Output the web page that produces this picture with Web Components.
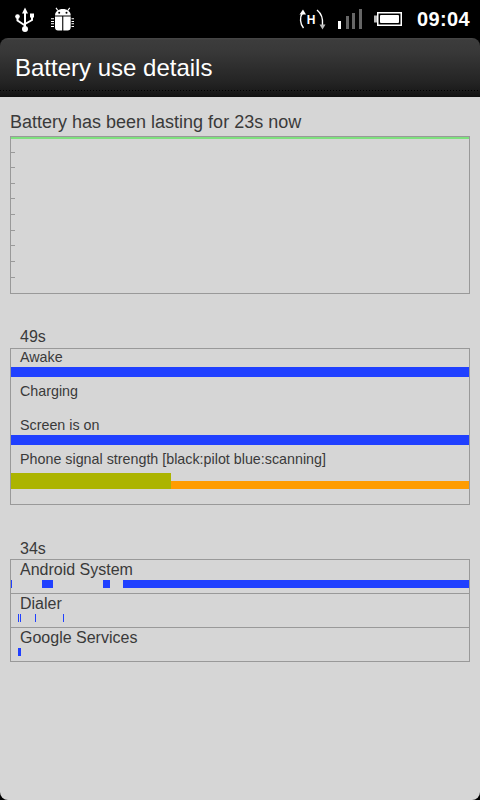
<!DOCTYPE html>
<html>
<head>
<meta charset="utf-8">
<title>Battery use details</title>
<style>
  html, body { margin: 0; padding: 0; background: #000; }
  body { width: 480px; height: 800px; overflow: hidden; font-family: "Liberation Sans", Arial, sans-serif; }
</style>
</head>
<body>
<phone-screen>
  <status-bar slot="status" time="09:04"></status-bar>
  <title-bar slot="title">Battery use details</title-bar>
  <battery-graph label="Battery has been lasting for 23s now"></battery-graph>
  <history-panel heading="49s" size="14" style="--panel-height:157px; --heading-height:21px; margin-top:33px">
    <history-row label="Awake" segments="0:458"></history-row>
    <history-row label="Charging"></history-row>
    <history-row label="Screen is on" segments="0:458"></history-row>
    <signal-row label="Phone signal strength [black:pilot blue:scanning]"></signal-row>
  </history-panel>
  <history-panel heading="34s" size="16" style="--panel-height:103px; --heading-height:20px; margin-top:34px">
    <history-row divided label="Android System" segments="0:1,31:11,92:7,112:346"></history-row>
    <history-row divided label="Dialer" segments="7:1,9:1,24:1,52:1"></history-row>
    <history-row label="Google Services" segments="7:3"></history-row>
  </history-panel>
</phone-screen>

<script>
const screenTemplate = document.createElement('template');
screenTemplate.innerHTML = `
  <style>
    :host {
      display: flex;
      flex-direction: column;
      width: 480px;
      height: 800px;
      background: #000;
    }
    .content {
      flex: 1;
      display: flex;
      flex-direction: column;
      padding: 14px 10px 0;
      background: #d6d6d6;
      border-radius: 0 0 8px 8px;
    }
  </style>
  <slot name="status"></slot>
  <slot name="title"></slot>
  <div class="content"><slot></slot></div>
`;

class PhoneScreen extends HTMLElement {
  constructor() {
    super();
    this.attachShadow({ mode: 'open' }).appendChild(screenTemplate.content.cloneNode(true));
  }
}

const statusTemplate = document.createElement('template');
statusTemplate.innerHTML = `
  <style>
    :host {
      display: flex;
      align-items: center;
      height: 38px;
      background: #000;
      color: #fff;
    }
    svg { display: block; flex: none; }
    .left { display: flex; gap: 14px; margin-left: 14px; margin-top: -1px; }
    .right { display: flex; align-items: center; margin-left: auto; margin-right: 10px; }
    .hspa { margin-right: 12px; }
    .signal { margin-right: 12px; }
    .battery { margin-right: 15px; }
    .time { font: bold 20px/24px "Liberation Sans", Arial, sans-serif; letter-spacing: 0.35px; }
  </style>
  <div class="left">
    <svg width="22" height="26" viewBox="0 0 22 26" fill="none" stroke="#fff" stroke-width="2">
      <path d="M11 5V22"/>
      <path d="M3.500 11V14.500L11 19.500"/>
      <path d="M18 10V14L11 18"/>
      <path d="M11 1.500L14 7.500H8Z" fill="#fff" stroke="none"/>
      <circle cx="3.500" cy="10.500" r="2.300" fill="#fff" stroke="none"/>
      <rect x="16" y="7.500" width="4" height="4" fill="#fff" stroke="none"/>
      <circle cx="11" cy="23" r="3" fill="#fff" stroke="none"/>
    </svg>
    <svg width="24" height="26" viewBox="0 0 24 26" fill="#fff">
      <path d="M5 9.500C5 5.500 8.500 3 12.850 3S20.700 5.500 20.700 9.500Z"/>
      <path d="M7.800 4.500L6 1.800M17.900 4.500L19.700 1.800" stroke="#fff" stroke-width="1.200"/>
      <circle cx="9.200" cy="6.800" r="1" fill="#000"/>
      <circle cx="16.500" cy="6.800" r="1" fill="#000"/>
      <path d="M5 10.500H12.200V24.500H8C6.300 24.500 5 23.200 5 21.500ZM13.300 10.500H20.700V21.500C20.700 23.200 19.400 24.500 17.700 24.500H13.300Z"/>
      <path d="M1 12.800H4M1 15.500H4M1 17.800H4M1 20.500H4M21.500 12.800H24M21.500 15.500H24M21.500 17.800H24M21.500 20.500H24" stroke="#fff" stroke-width="1.100"/>
    </svg>
  </div>
  <div class="right">
    <svg class="hspa" width="28" height="24" viewBox="0 0 28 24" fill="none" stroke="#fff" stroke-width="1.400">
      <path d="M4.500 6C1.500 10 2 17 5.500 21"/>
      <path d="M5 2.500L8 7.500H1.500Z" fill="#fff" stroke="none"/>
      <path d="M19 3C24 7 25 13 24.500 18"/>
      <path d="M24.500 22.500L21.500 17.500H27.500Z" fill="#bbb" stroke="none"/>
      <text x="13" y="16.500" text-anchor="middle" fill="#fff" stroke="none" font-family="Liberation Sans" font-weight="bold" font-size="12">H</text>
    </svg>
    <svg class="signal" width="24" height="20" viewBox="0 0 24 20">
      <rect x="0" y="12" width="3" height="8" fill="#fff"/>
      <rect x="8" y="7" width="3" height="13" fill="#666"/>
      <rect x="14" y="4" width="3" height="16" fill="#666"/>
      <rect x="21" y="0" width="3" height="20" fill="#666"/>
    </svg>
    <svg class="battery" width="28" height="14" viewBox="0 0 28 14">
      <rect x="0" y="3.500" width="3" height="7" fill="#bbb"/>
      <rect x="3.750" y=".750" width="23.500" height="12.500" fill="#000" stroke="#fff" stroke-width="1.500"/>
      <rect x="6" y="3" width="19" height="8" rx="1" fill="#fff"/>
    </svg>
    <span class="time"></span>
  </div>
`;

class StatusBar extends HTMLElement {
  constructor() {
    super();
    this.attachShadow({ mode: 'open' }).appendChild(statusTemplate.content.cloneNode(true));
  }

  connectedCallback() {
    this.shadowRoot.querySelector('.time').textContent = this.getAttribute('time') || '';
  }
}

const titleTemplate = document.createElement('template');
titleTemplate.innerHTML = `
  <style>
    :host {
      display: flex;
      align-items: center;
      box-sizing: border-box;
      height: 59px;
      padding: 1px 0 0 15px;
      color: #fff;
      font: 24px "Liberation Sans", Arial, sans-serif;
      border-radius: 8px 8px 0 0;
      background:
        repeating-linear-gradient(90deg, #000 0 1px, transparent 1px 3px) 0 52px / 100% 1px no-repeat,
        linear-gradient(#484848 0, #3c3c3c 2px, #383838 14px, #242424 44px, #1c1c1c 52px, #101010 59px);
    }
  </style>
  <slot></slot>
`;

class TitleBar extends HTMLElement {
  constructor() {
    super();
    this.attachShadow({ mode: 'open' }).appendChild(titleTemplate.content.cloneNode(true));
  }
}

const graphTemplate = document.createElement('template');
graphTemplate.innerHTML = `
  <style>
    :host {
      display: block;
      color: #3a3a3a;
      font: 18px "Liberation Sans", Arial, sans-serif;
    }
    .label { height: 25px; line-height: 23px; }
    .plot {
      box-sizing: border-box;
      height: 158px;
      border: 1px solid #999;
      display: flex;
      flex-direction: column;
    }
    .line { height: 2px; background: #7fe07f; flex: none; }
    .ticks {
      flex: 1;
      display: flex;
      flex-direction: column;
      padding-top: 12.500px;
      gap: 14.670px;
    }
    .ticks i { display: block; width: 4px; height: 1px; background: #999; }
  </style>
  <div class="label"></div>
  <div class="plot">
    <div class="line"></div>
    <div class="ticks"><i></i><i></i><i></i><i></i><i></i><i></i><i></i><i></i><i></i></div>
  </div>
`;

class BatteryGraph extends HTMLElement {
  constructor() {
    super();
    this.attachShadow({ mode: 'open' }).appendChild(graphTemplate.content.cloneNode(true));
  }

  connectedCallback() {
    this.shadowRoot.querySelector('.label').textContent = this.getAttribute('label') || '';
  }
}

const panelTemplate = document.createElement('template');
panelTemplate.innerHTML = `
  <style>
    :host {
      display: block;
      color: #3a3a3a;
      font-family: "Liberation Sans", Arial, sans-serif;
    }
    .heading { padding-left: 10px; height: var(--heading-height); font-size: 16px; line-height: 20px; }
    .box {
      box-sizing: border-box;
      height: var(--panel-height);
      border: 1px solid #999;
    }
  </style>
  <div class="heading"></div>
  <div class="box"><slot></slot></div>
`;

class HistoryPanel extends HTMLElement {
  constructor() {
    super();
    this.attachShadow({ mode: 'open' }).appendChild(panelTemplate.content.cloneNode(true));
  }

  connectedCallback() {
    const large = this.getAttribute('size') === '16';
    this.shadowRoot.querySelector('.heading').textContent = this.getAttribute('heading') || '';
    this.style.setProperty('--label-size', large ? '16px' : '14.300px');
    this.style.setProperty('--label-line', large ? '20px' : '16px');
    this.style.setProperty('--track-height', large ? '8px' : '10px');
    this.style.setProperty('--row-height', '34px');
    this.style.setProperty('--label-height', large ? '20px' : '18px');
  }
}

const rowTemplate = document.createElement('template');
rowTemplate.innerHTML = `
  <style>
    :host {
      display: block;
      box-sizing: border-box;
      height: var(--row-height);
    }
    :host([divided]) { border-bottom: 1px solid #999; }
    .label {
      height: var(--label-height);
      padding-left: 9px;
      font-size: var(--label-size);
      line-height: var(--label-line);
    }
    .track { display: flex; height: var(--track-height); }
    .track i { display: block; flex: none; background: #2040ff; }
  </style>
  <div class="label"></div>
  <div class="track"></div>
`;

class HistoryRow extends HTMLElement {
  constructor() {
    super();
    this.attachShadow({ mode: 'open' }).appendChild(rowTemplate.content.cloneNode(true));
  }

  connectedCallback() {
    this.shadowRoot.querySelector('.label').textContent = this.getAttribute('label') || '';
    const track = this.shadowRoot.querySelector('.track');
    const segments = this.getAttribute('segments');
    if (!segments) return;
    let cursor = 0;
    segments.split(',').forEach(item => {
      const [start, width] = item.split(':').map(Number);
      const seg = document.createElement('i');
      seg.style.marginLeft = (start - cursor) + 'px';
      seg.style.width = width + 'px';
      track.appendChild(seg);
      cursor = start + width;
    });
  }
}

const signalTemplate = document.createElement('template');
signalTemplate.innerHTML = `
  <style>
    :host { display: block; }
    .label {
      height: 22px;
      padding-left: 9px;
      font-size: var(--label-size);
      line-height: 16px;
    }
    .track { display: flex; align-items: flex-end; height: 16px; }
    .olive { width: 160px; height: 16px; background: #acb400; }
    .orange { flex: 1; height: 8px; background: #ff9c00; }
  </style>
  <div class="label"></div>
  <div class="track"><div class="olive"></div><div class="orange"></div></div>
`;

class SignalRow extends HTMLElement {
  constructor() {
    super();
    this.attachShadow({ mode: 'open' }).appendChild(signalTemplate.content.cloneNode(true));
  }

  connectedCallback() {
    this.shadowRoot.querySelector('.label').textContent = this.getAttribute('label') || '';
  }
}

customElements.define('phone-screen', PhoneScreen);
customElements.define('status-bar', StatusBar);
customElements.define('title-bar', TitleBar);
customElements.define('battery-graph', BatteryGraph);
customElements.define('history-panel', HistoryPanel);
customElements.define('history-row', HistoryRow);
customElements.define('signal-row', SignalRow);
</script>
</body>
</html>
